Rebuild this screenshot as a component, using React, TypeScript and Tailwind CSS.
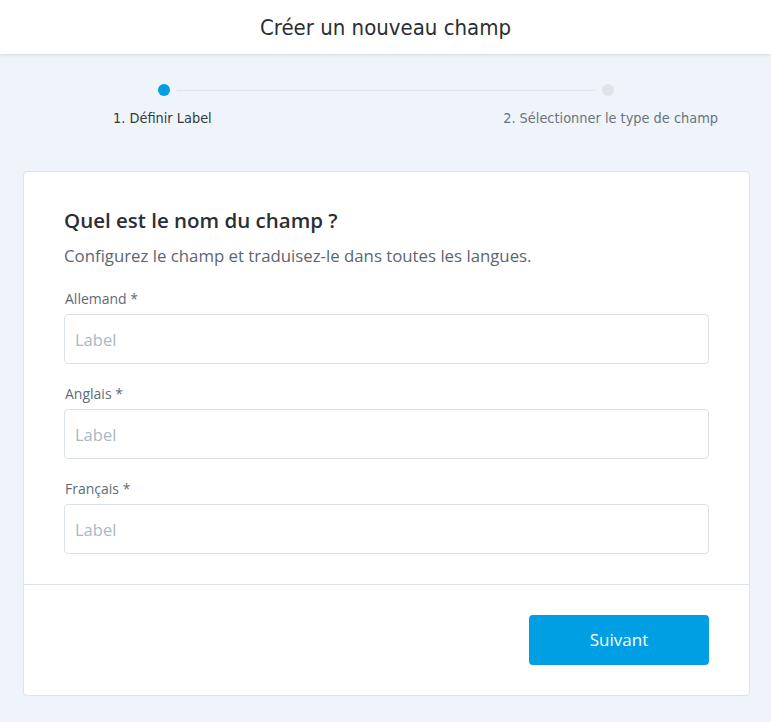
import React from "react";

function Field({ label }: { label: string }) {
  return (
    <div className="flex flex-col">
      <label className="text-[14px] leading-[20px] text-[#5f6b76] pl-[1px] mb-[5px]">{label}</label>
      <input
        placeholder="Label"
        className="h-[50px] w-full rounded-[4px] border border-[#dbe2e8] bg-white px-[10px] text-[16.5px] text-[#333] placeholder:text-[#a9b8c3] outline-none"
      />
    </div>
  );
}

export default function App() {
  return (
    <div className="min-h-[722px] bg-[#eff4fb]" style={{ fontFamily: '"Open Sans", sans-serif' }}>
      <header className="h-[54px] bg-white flex items-center justify-center shadow-[0_1px_3px_rgba(0,0,0,0.12)] relative z-10">
        <h1 className="text-[22px] text-[#2a2f33]" style={{ fontFamily: '"DejaVu Sans Condensed", "DejaVu Sans", sans-serif', fontStretch: "condensed" }}>
          Créer un nouveau champ
        </h1>
      </header>
      <div className="ml-[23px] mr-[21px]">
        <div className="pt-[26px] pb-[43px]" style={{ fontFamily: '"DejaVu Sans Condensed", "DejaVu Sans", sans-serif', fontStretch: "condensed" }}>
          <div className="relative h-[12px] mx-[135px]">
            <div className="absolute left-[5px] right-[5px] top-[5px] flex items-center">
              <div className="w-[12px] h-[12px] rounded-full bg-[#009fe3] -mt-[1px] -ml-[5px]" />
              <div className="flex-1 h-[1px] bg-[#dfe5ea] mx-[7px]" />
              <div className="w-[12px] h-[12px] rounded-full bg-[#dfe3e8] -mt-[1px] -mr-[4px]" />
            </div>
          </div>
          <div className="flex justify-between mt-[16px] text-[14.4px] leading-[20px]">
            <span className="text-[#33393e] ml-[90px]">1. Définir Label</span>
            <span className="text-[#6a737b] mr-[32px]">2. Sélectionner le type de champ</span>
          </div>
        </div>
        <div className="bg-white border border-[#dde3e8] rounded-[4px]">
          <div className="px-[40px] pt-[34px] pb-[30px]">
            <h2 className="text-[20.5px] leading-[28px] font-semibold text-[#2b2f33]">Quel est le nom du champ ?</h2>
            <p className="mt-[10px] text-[16.8px] leading-[24px] text-[#5c6670]">Configurez le champ et traduisez-le dans toutes les langues.</p>
            <div className="mt-[21px] flex flex-col gap-[20px]">
              <Field label="Allemand *" />
              <Field label="Anglais *" />
              <Field label="Français *" />
            </div>
          </div>
          <div className="border-t border-[#dde3e8] px-[40px] py-[30px] flex justify-end">
            <button className="w-[180px] h-[50px] rounded-[4px] bg-[#009fe3] text-white text-[17px] font-medium">Suivant</button>
          </div>
        </div>
      </div>
    </div>
  );
}
